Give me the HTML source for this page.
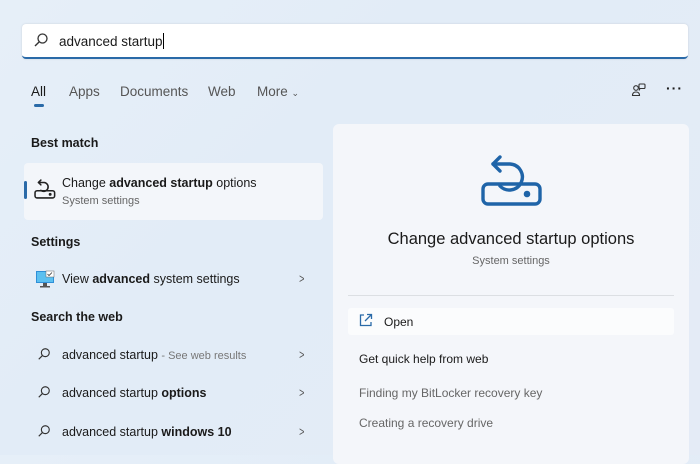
<!DOCTYPE html>
<html><head><style>
*{margin:0;padding:0;box-sizing:border-box}
body{width:700px;height:455px;overflow:hidden;font-family:"Liberation Sans",sans-serif;color:#1a1a1a;
background:linear-gradient(135deg,#e6eff8 0%,#e2ecf7 40%,#e4ebf6 100%);position:relative}
.a{position:absolute;white-space:nowrap}
.sb{left:22px;top:24px;width:666px;height:35px;background:#fff;border-radius:4px;border-bottom:2px solid #2a6aa8;box-shadow:0 0 2px rgba(0,0,0,.12)}
.tab{top:84px;font-size:13.5px;color:#555}
.h{font-size:12.5px;font-weight:bold;color:#1a1a1a}
.it{font-size:12.5px;color:#1a1a1a}
.chev{font-size:13px;color:#555;left:298px;transform:scaleX(.7)}
.panel{left:333px;top:124px;width:356px;height:340px;background:#f4f6fa;border-radius:6px}
.gray{color:#666}
</style></head><body>
<div class="a sb"></div>
<svg class="a" style="left:33px;top:32px" width="16" height="16" viewBox="0 0 16 16"><circle cx="9.5" cy="6.5" r="4.5" fill="none" stroke="#333" stroke-width="1.3"/><path d="M6.3 9.7L2 14" stroke="#333" stroke-width="1.4"/></svg>
<div class="a" style="left:59px;top:33px;font-size:13.5px">advanced startup<span style="display:inline-block;width:1px;height:16px;background:#000;vertical-align:-3px"></span></div>

<div class="a tab" style="left:31px;color:#1a1a1a">All</div>
<div class="a" style="left:34px;top:104px;width:10px;height:3px;border-radius:2px;background:#2a6aa8"></div>
<div class="a tab" style="left:69px">Apps</div>
<div class="a tab" style="left:120px">Documents</div>
<div class="a tab" style="left:208px">Web</div>
<div class="a tab" style="left:257px">More <span style="font-size:9px">&#8964;</span></div>
<svg class="a" style="left:631px;top:82px" width="16" height="16" viewBox="0 0 16 16" fill="none" stroke="#333" stroke-width="1.1"><circle cx="5" cy="6" r="2.3"/><path d="M1.5 13.5c0-2.5 1.5-3.5 3.5-3.5s3.5 1 3.5 3.5z"/><rect x="8" y="2" width="6" height="4.5" rx="1"/><path d="M9 6.5l-1 2"/></svg>
<div class="a" style="left:666px;top:80px;font-size:14px;font-weight:bold;letter-spacing:1px">···</div>

<div class="a h" style="left:31px;top:136px">Best match</div>
<div class="a" style="left:24px;top:163px;width:299px;height:57px;background:#f3f6fa;border-radius:4px"></div>
<div class="a" style="left:24px;top:181px;width:3px;height:18px;background:#2a6aa8;border-radius:2px"></div>
<svg class="a" style="left:34px;top:178px" width="22" height="22" viewBox="0 0 64 64" fill="none" stroke="#222" stroke-width="4.5" stroke-linecap="round" stroke-linejoin="round"><path d="M20 6L13 13L20 20"/><path d="M13 13H30A13 13 0 1 1 20 36"/><rect x="3" y="37" width="57" height="21" rx="6"/><circle cx="47" cy="47.5" r="2" fill="#222"/></svg>
<div class="a it" style="left:62px;top:176px">Change <b>advanced startup</b> options</div>
<div class="a" style="left:62px;top:195px;font-size:11px;color:#666">System settings</div>

<div class="a h" style="left:31px;top:235px">Settings</div>
<svg class="a" style="left:35px;top:270px" width="20" height="18" viewBox="0 0 20 18"><rect x="1" y="1" width="18" height="12" fill="#2f8fd8"/><rect x="2" y="2" width="16" height="10" fill="#5cc0f0"/><rect x="11" y="1" width="8" height="6" fill="#fff" stroke="#666" stroke-width=".5"/><path d="M12.5 4l1.5 1.5 3-3" stroke="#333" fill="none" stroke-width=".8"/><rect x="8" y="13" width="4" height="3" fill="#555"/><rect x="5" y="16" width="10" height="1.5" fill="#555"/></svg>
<div class="a it" style="left:62px;top:272px">View <b>advanced</b> system settings</div>
<div class="a chev" style="top:271px">&gt;</div>

<div class="a h" style="left:31px;top:310px">Search the web</div>
<svg class="a" style="left:37px;top:347px" width="14" height="14" viewBox="0 0 16 16"><circle cx="9.5" cy="6.5" r="4.5" fill="none" stroke="#333" stroke-width="1.3"/><path d="M6.3 9.7L2 14" stroke="#333" stroke-width="1.4"/></svg>
<div class="a it" style="left:62px;top:348px">advanced startup <span style="font-size:11px;color:#777">- See web results</span></div>
<div class="a chev" style="top:347px">&gt;</div>
<svg class="a" style="left:37px;top:385px" width="14" height="14" viewBox="0 0 16 16"><circle cx="9.5" cy="6.5" r="4.5" fill="none" stroke="#333" stroke-width="1.3"/><path d="M6.3 9.7L2 14" stroke="#333" stroke-width="1.4"/></svg>
<div class="a it" style="left:62px;top:386px">advanced startup <b>options</b></div>
<div class="a chev" style="top:385px">&gt;</div>
<svg class="a" style="left:37px;top:424px" width="14" height="14" viewBox="0 0 16 16"><circle cx="9.5" cy="6.5" r="4.5" fill="none" stroke="#333" stroke-width="1.3"/><path d="M6.3 9.7L2 14" stroke="#333" stroke-width="1.4"/></svg>
<div class="a it" style="left:62px;top:425px">advanced startup <b>windows 10</b></div>
<div class="a chev" style="top:424px">&gt;</div>

<div class="a panel"></div>
<svg class="a" style="left:480px;top:150px" width="64" height="58" viewBox="0 0 64 58" fill="none" stroke="#1f64a8" stroke-width="3.4" stroke-linecap="round" stroke-linejoin="round"><path d="M20 7L13 14L20 21"/><path d="M13 14H30A13 13 0 1 1 20 36"/><rect x="3" y="34" width="57" height="20" rx="5"/><circle cx="47" cy="44" r="1.6" fill="#1f64a8"/></svg>
<div class="a" style="left:333px;width:356px;text-align:center;top:230px;font-size:16.5px;color:#1a1a1a">Change advanced startup options</div>
<div class="a" style="left:333px;width:356px;text-align:center;top:255px;font-size:11px;color:#666">System settings</div>
<div class="a" style="left:348px;top:295px;width:326px;height:1px;background:#dcdfe3"></div>
<div class="a" style="left:348px;top:308px;width:326px;height:27px;background:#fbfcfd;border-radius:3px"></div>
<svg class="a" style="left:358px;top:313px" width="15" height="15" viewBox="0 0 15 15" fill="none" stroke="#2a6aa8" stroke-width="1.3"><path d="M6 2H2.5v10.5H13V9"/><path d="M9 1.5h4.5V6M13.5 1.5L7 8"/></svg>
<div class="a" style="left:384px;top:315px;font-size:12px">Open</div>
<div class="a" style="left:359px;top:352px;font-size:12px">Get quick help from web</div>
<div class="a gray" style="left:359px;top:386px;font-size:12px">Finding my BitLocker recovery key</div>
<div class="a gray" style="left:359px;top:416px;font-size:12px">Creating a recovery drive</div>
</body></html>
